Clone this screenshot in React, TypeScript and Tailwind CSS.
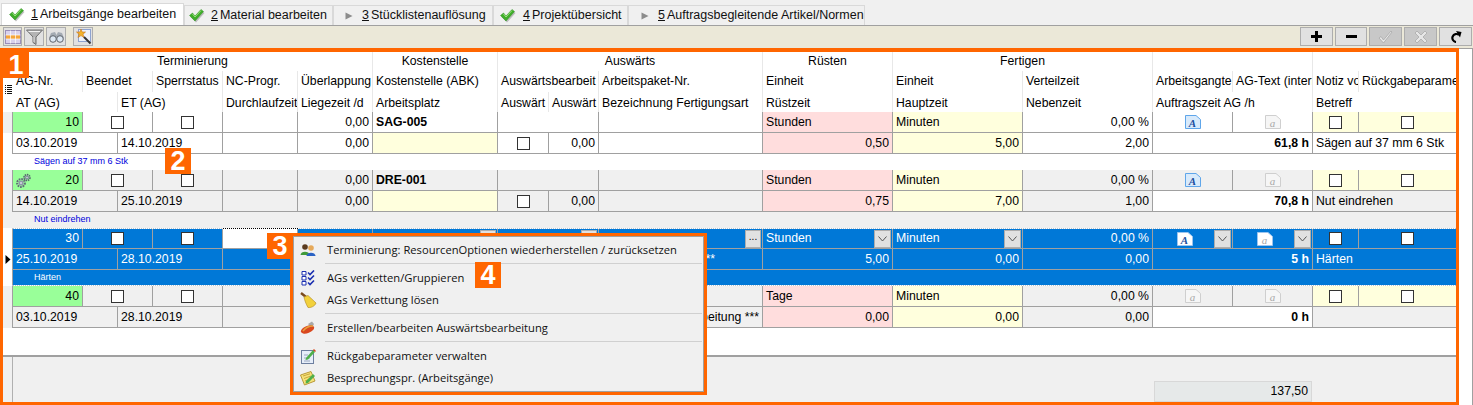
import React from 'react';

const TRACKS = 'grid grid-cols-[70px_35px_35px_70px_75px_75px_125px_51px_50px_164px_130px_130px_130px_80px_80px_46px_97px]';
const spans: Record<number, string> = { 1: 'col-span-1', 2: 'col-span-2', 3: 'col-span-3', 6: 'col-span-6' };

const Check = () => (
  <svg width="16" height="14" viewBox="0 0 16 14" className="shrink-0">
    <path d="M1.5 8 L4.5 5.5 L7 8.5 L13 2 L15.5 4 L7 13.5 Z" fill="#9a9a9a" opacity="0.6" />
    <path d="M0.5 6.5 L3.5 4 L6 7 L12 0.5 L14.5 2.5 L6 12 Z" fill="#3fae2a" stroke="#2f8f20" strokeWidth="0.5" />
    <path d="M3.5 5 L6 8 L12 1.5" fill="none" stroke="#9be07e" strokeWidth="1" />
  </svg>
);

const Tri = () => (
  <svg width="8" height="8" viewBox="0 0 8 8" className="shrink-0">
    <path d="M0.5 0.5 L7.5 4 L0.5 7.5 Z" fill="#8c8c8c" />
  </svg>
);

const Tab = ({ w, pl, icon, num, label, active }: { w: string; pl: string; icon: React.ReactNode; num: string; label: string; active?: boolean }) => (
  <div className={`${w} ${pl} ${active ? 'h-[22px] bg-white' : 'h-[20px] bg-[#f0f0f0]'} flex items-center border border-b-0 border-[#d9d9d9] whitespace-nowrap text-[12.5px] text-[#111]`}>
    {icon}
    <u>{num}</u>
    <span className="ml-[2px]">{label}</span>
  </div>
);

const ToolBtn = ({ w, off, children }: { w: string; off?: boolean; children: React.ReactNode }) => (
  <div className={`${w} ${off ? 'bg-[#c8c8c8]' : 'bg-[#e1e1e1]'} h-[19px] border border-[#adadad] flex items-center justify-center`}>{children}</div>
);

const Checkbox = () => <div className="w-[13px] h-[13px] bg-white border border-[#333]" />;

const Cell = ({ span = 1, className = '', flush, children }: { span?: number; className?: string; flush?: boolean; children?: React.ReactNode }) => (
  <div className={`${spans[span]} ${flush ? 'pl-[3px] pr-px' : 'px-[3px]'} flex items-center overflow-hidden whitespace-nowrap border-r border-b border-[#a0a0a0] ${className}`}>
    {children}
  </div>
);

const Head = ({ span = 1, className = '', children }: { span?: number; className?: string; children?: React.ReactNode }) => (
  <div className={`${spans[span]} px-[3px] flex items-center overflow-hidden whitespace-nowrap border-r border-[#e8e8e8] ${className}`}>{children}</div>
);

const DocIcon = ({ letter, tone }: { letter: string; tone: 'blue' | 'gray' | 'selBlue' | 'selGray' }) => {
  const fill = tone === 'blue' ? '#d8eafb' : tone === 'gray' ? '#f6f6f6' : '#ffffff';
  const stroke = tone === 'blue' ? '#5fa6ea' : tone === 'gray' ? '#cfcfcf' : '#9cc4ee';
  const ink = tone === 'blue' || tone === 'selBlue' ? '#1d4f9e' : '#a8a8a8';
  return (
    <svg width="16" height="14" viewBox="0 0 16 14">
      <path d="M0.5 0.5 H11 L15.5 4.5 V13.5 H0.5 Z" fill={fill} stroke={stroke} />
      <text x="7.5" y="11.5" textAnchor="middle" fontSize="11" fontWeight={letter === 'A' ? 700 : 400} fontStyle="italic" fontFamily="Liberation Serif, serif" fill={ink}>
        {letter}
      </text>
    </svg>
  );
};

const Arrow = () => (
  <div className="w-[17px] h-[18px] shrink-0 bg-[#e1e1e1] border border-[#adadad] flex items-center justify-center">
    <svg width="9" height="6" viewBox="0 0 9 6">
      <path d="M0.5 0.5 L4.5 5 L8.5 0.5" fill="none" stroke="#555" />
    </svg>
  </div>
);

const Dots = () => (
  <div className="w-[16px] h-[18px] shrink-0 bg-[#e1e1e1] border border-[#adadad] flex items-center justify-center text-[10px] leading-none pb-[3px] text-black">...</div>
);

const Gears = () => (
  <svg width="15" height="15" viewBox="0 0 15 15" className="shrink-0">
    <circle cx="5" cy="10" r="3.9" fill="none" stroke="#5f6a78" strokeWidth="2" strokeDasharray="1.7 0.9" />
    <circle cx="5" cy="10" r="2.6" fill="#8f99a8" />
    <circle cx="5" cy="10" r="1" fill="#d5dbe3" />
    <circle cx="11" cy="4.5" r="2.9" fill="none" stroke="#56606e" strokeWidth="1.8" strokeDasharray="1.4 0.8" />
    <circle cx="11" cy="4.5" r="2" fill="#838d9c" />
    <circle cx="11" cy="4.5" r="0.8" fill="#d5dbe3" />
  </svg>
);

type Line = { h: string; ind?: string; arrow?: boolean; children: React.ReactNode };
const GridLine = ({ h, ind = 'bg-white', arrow, children }: Line) => (
  <div className={`flex w-[1453px] ${h}`}>
    <div className={`w-[9px] shrink-0 flex items-center justify-center ${ind}`}>
      {arrow && (
        <svg width="6" height="9" viewBox="0 0 6 9">
          <path d="M0.5 0 L5.5 4.5 L0.5 9 Z" fill="#000" />
        </svg>
      )}
    </div>
    <div className={`${TRACKS} border-l border-[#a0a0a0]`}>{children}</div>
  </div>
);

const MenuItem = ({ icon, label }: { icon: React.ReactNode; label: string }) => (
  <div className="h-[22px] flex items-center whitespace-nowrap">
    <div className="w-[33px] pl-[6px] shrink-0 flex items-center">{icon}</div>
    <span>{label}</span>
  </div>
);

const Sep = () => (
  <div className="h-[6px] pl-[31px] pr-px pt-[2px]">
    <div className="h-px bg-[#d0d0d0]" />
  </div>
);

const Badge = ({ n, pos }: { n: string; pos: string }) => (
  <div className={`absolute ${pos} w-[26px] h-[26px] bg-[#ff6600] text-white font-bold text-[27px] leading-none flex items-center justify-center`}>{n}</div>
);

export default function App() {
  return (
    <div className="relative w-[1473px] h-[405px] overflow-hidden bg-white flex flex-col font-['Liberation_Sans',sans-serif] text-[12.25px] text-black">
      {/* tabs */}
      <div className="h-[26px] shrink-0 pt-[3px] bg-[#f0f0f0] border-b border-[#a0a0a0] flex items-end pl-px">
        <Tab active w="w-[183px]" pl="pl-[7px]" icon={<span className="mr-[6px] flex"><Check /></span>} num="1" label="Arbeitsgänge bearbeiten" />
        <Tab w="w-[149px]" pl="pl-[4px]" icon={<span className="mr-[6px] flex"><Check /></span>} num="2" label="Material bearbeiten" />
        <Tab w="w-[160px]" pl="pl-[11px]" icon={<span className="mr-[9px] flex"><Tri /></span>} num="3" label="Stücklistenauflösung" />
        <Tab w="w-[135px]" pl="pl-[6px]" icon={<span className="mr-[7px] flex"><Check /></span>} num="4" label="Projektübersicht" />
        <Tab w="w-[237px]" pl="pl-[12px]" icon={<span className="mr-[9px] flex"><Tri /></span>} num="5" label="Auftragsbegleitende Artikel/Normen" />
      </div>

      {/* toolbar */}
      <div className="h-[22px] shrink-0 bg-[#ebe8d8] flex items-start pt-px pl-[3px] pr-px">
        <div className="flex gap-[2px]">
          <ToolBtn w="w-[19px]">
            <svg width="16" height="14" viewBox="0 0 16 14">
              <rect x="0.5" y="0.5" width="15" height="13" fill="#d9d2ec" stroke="#9a8fb8" />
              <rect x="1" y="5" width="14" height="4" fill="#f4a63c" />
              <path d="M5.5 0.5 V13.5 M10.5 0.5 V13.5 M0.5 5 H15.5 M0.5 9 H15.5" stroke="#fff" strokeWidth="0.7" />
            </svg>
          </ToolBtn>
          <ToolBtn w="w-[20px]">
            <svg width="17" height="16" viewBox="0 0 17 16">
              <path d="M0.5 1 H16.5 L10 8 V15.5 L7 13.5 V8 Z" fill="#b4b4b4" stroke="#6f6f6f" />
              <path d="M2.5 2.5 H14" stroke="#f2f2f2" />
              <path d="M8 8 V13" stroke="#dedede" />
            </svg>
          </ToolBtn>
          <ToolBtn w="w-[20px]">
            <svg width="17" height="12" viewBox="0 0 17 12">
              <path d="M3 2 L7 1 L8.5 4 L10 1 L14 2 L16 7 H1 Z" fill="#a4abb3" />
              <circle cx="5" cy="8" r="3.3" fill="#dde8f3" stroke="#5f656c" />
              <circle cx="12" cy="8" r="3.3" fill="#dde8f3" stroke="#5f656c" />
            </svg>
          </ToolBtn>
          <div className="w-[3px]" />
          <ToolBtn w="w-[20px]">
            <svg width="17" height="17" viewBox="0 0 17 17">
              <rect x="3.5" y="1.5" width="12" height="12" fill="#eef2fb" stroke="#8ea3cf" />
              <path d="M6 1 L7.2 4 L10.5 4 L8 6.2 L9 9.5 L6 7.6 L3 9.5 L4 6.2 L1.5 4 L4.8 4 Z" fill="#f2b32c" stroke="#c9731a" strokeWidth="0.6" />
              <path d="M9 9 L15.5 15.5" stroke="#333" strokeWidth="2" />
            </svg>
          </ToolBtn>
        </div>
        <div className="ml-auto flex gap-[2px]">
          <ToolBtn w="w-[33px]">
            <svg width="11" height="11" viewBox="0 0 11 11"><path d="M4 0 H7 V4 H11 V7 H7 V11 H4 V7 H0 V4 H4 Z" fill="#000" /></svg>
          </ToolBtn>
          <ToolBtn w="w-[32px]">
            <svg width="11" height="3" viewBox="0 0 11 3"><rect width="11" height="3" fill="#000" /></svg>
          </ToolBtn>
          <ToolBtn off w="w-[33px]">
            <svg width="15" height="14" viewBox="0 0 15 14"><path d="M1 8 L3 6.5 L5.5 10 L13 1 L14 2 L5.5 13 Z" fill="#e6e6e6" stroke="#a4a4a4" strokeWidth="0.7" /></svg>
          </ToolBtn>
          <ToolBtn off w="w-[33px]">
            <svg width="14" height="14" viewBox="0 0 14 14"><path d="M1 3 L3 1 L7 5 L11 1 L13 3 L9 7 L13 11 L11 13 L7 9 L3 13 L1 11 L5 7 Z" fill="#e6e6e6" stroke="#a4a4a4" strokeWidth="0.7" /></svg>
          </ToolBtn>
          <ToolBtn w="w-[33px]">
            <svg width="13" height="12" viewBox="0 0 13 12">
              <path d="M10 4 A4 4 0 1 0 7 11" fill="none" stroke="#000" strokeWidth="2.2" />
              <path d="M7 0 L12.5 1 L11 6.5 Z" fill="#000" />
            </svg>
          </ToolBtn>
        </div>
      </div>

      {/* main grid */}
      <div className="relative flex-1 flex flex-col border-t border-r border-[#a0a0a0] pl-[3px] pt-[3px]">
        <div className="flex w-[1453px]">
          <div className="w-[10px] shrink-0 pt-[33px] pl-[2px]">
            <svg width="7" height="10" viewBox="0 0 7 10" className="block">
              <path d="M0 0.5 H1 M2 0.5 H7 M0 2.5 H1 M2 2.5 H7 M0 4.5 H1 M2 4.5 H7 M0 6.5 H1 M2 6.5 H7 M0 8.5 H1 M2 8.5 H7" stroke="#111" />
            </svg>
          </div>
          <div className="flex flex-col">
            <div className={`${TRACKS} h-[19px]`}>
              <Head span={6} className="justify-center">Terminierung</Head>
              <Head className="justify-center">Kostenstelle</Head>
              <Head span={3} className="justify-center">Auswärts</Head>
              <Head className="justify-center">Rüsten</Head>
              <Head span={2} className="justify-center">Fertigen</Head>
              <Head span={2} />
              <Head span={2} className="border-r-0" />
            </div>
            <div className={`${TRACKS} h-[21px]`}>
              <Head>AG-Nr.</Head>
              <Head span={2}>Beendet</Head>
              <Head>Sperrstatus</Head>
              <Head>NC-Progr.</Head>
              <Head>Überlappung</Head>
              <Head>Kostenstelle (ABK)</Head>
              <Head span={2}>Auswärtsbearbeit</Head>
              <Head>Arbeitspaket-Nr.</Head>
              <Head>Einheit</Head>
              <Head>Einheit</Head>
              <Head>Verteilzeit</Head>
              <Head>Arbeitsgangte</Head>
              <Head>AG-Text (intern</Head>
              <Head>Notiz vo</Head>
              <Head className="border-r-0">Rückgabeparame</Head>
            </div>
            <div className={`${TRACKS} h-[20px] [&>div]:pt-[2px]`}>
              <Head span={2}>AT (AG)</Head>
              <Head span={2}>ET (AG)</Head>
              <Head>Durchlaufzeit</Head>
              <Head>Liegezeit /d</Head>
              <Head>Arbeitsplatz</Head>
              <Head>Auswärt</Head>
              <Head>Auswärt</Head>
              <Head>Bezeichnung Fertigungsart</Head>
              <Head>Rüstzeit</Head>
              <Head>Hauptzeit</Head>
              <Head>Nebenzeit</Head>
              <Head span={2}>Auftragszeit AG /h</Head>
              <Head span={2} className="border-r-0">Betreff</Head>
            </div>
          </div>
        </div>

        {/* AG 10 */}
        <GridLine h="h-[21px]" ind="bg-[#f0f0f0]">
          <Cell className="bg-[#99ff99] justify-end">10</Cell>
          <Cell span={2} className="justify-center"><Checkbox /></Cell>
          <Cell className="justify-center"><Checkbox /></Cell>
          <Cell />
          <Cell className="justify-end">0,00</Cell>
          <Cell className="font-bold">SAG-005</Cell>
          <Cell span={2} />
          <Cell />
          <Cell className="bg-[#ffdddd]">Stunden</Cell>
          <Cell className="bg-[#ffffdd]">Minuten</Cell>
          <Cell className="justify-end">0,00 %</Cell>
          <Cell className="justify-center"><DocIcon letter="A" tone="blue" /></Cell>
          <Cell className="justify-center"><DocIcon letter="a" tone="gray" /></Cell>
          <Cell className="bg-[#ffffdd] justify-center"><Checkbox /></Cell>
          <Cell className="bg-[#ffffdd] justify-center border-r-0"><Checkbox /></Cell>
        </GridLine>
        <GridLine h="h-[21px]">
          <Cell span={2}>03.10.2019</Cell>
          <Cell span={2}>14.10.2019</Cell>
          <Cell />
          <Cell className="justify-end">0,00</Cell>
          <Cell className="bg-[#ffffdd]" />
          <Cell className="justify-center"><Checkbox /></Cell>
          <Cell className="justify-end">0,00</Cell>
          <Cell />
          <Cell className="bg-[#ffdddd] justify-end">0,50</Cell>
          <Cell className="bg-[#ffffdd] justify-end">5,00</Cell>
          <Cell className="justify-end">2,00</Cell>
          <Cell span={2} className="justify-end font-bold">61,8 h</Cell>
          <Cell span={2} className="border-r-0">Sägen auf 37 mm 6 Stk</Cell>
        </GridLine>
        <div className="h-[16px] w-[1453px] pl-[31px] flex items-center text-[9px] text-[#0000dd]">Sägen auf 37 mm 6 Stk</div>

        {/* AG 20 */}
        <div className="bg-[#f0f0f0] w-[1453px]">
          <GridLine h="h-[21px]" ind="bg-[#f0f0f0]">
            <Cell className="bg-[#99ff99] justify-between"><Gears /><span>20</span></Cell>
            <Cell span={2} className="justify-center"><Checkbox /></Cell>
            <Cell className="justify-center"><Checkbox /></Cell>
            <Cell />
            <Cell className="justify-end">0,00</Cell>
            <Cell className="font-bold">DRE-001</Cell>
            <Cell span={2} />
            <Cell />
            <Cell className="bg-[#ffdddd]">Stunden</Cell>
            <Cell className="bg-[#ffffdd]">Minuten</Cell>
            <Cell className="justify-end">0,00 %</Cell>
            <Cell className="justify-center"><DocIcon letter="A" tone="blue" /></Cell>
            <Cell className="justify-center"><DocIcon letter="a" tone="gray" /></Cell>
            <Cell className="bg-[#ffffdd] justify-center"><Checkbox /></Cell>
            <Cell className="bg-[#ffffdd] justify-center border-r-0"><Checkbox /></Cell>
          </GridLine>
          <GridLine h="h-[21px]" ind="bg-[#f0f0f0]">
            <Cell span={2}>14.10.2019</Cell>
            <Cell span={2}>25.10.2019</Cell>
            <Cell />
            <Cell className="justify-end">0,00</Cell>
            <Cell className="bg-[#ffffdd]" />
            <Cell className="justify-center"><Checkbox /></Cell>
            <Cell className="justify-end">0,00</Cell>
            <Cell />
            <Cell className="bg-[#ffdddd] justify-end">0,75</Cell>
            <Cell className="bg-[#ffffdd] justify-end">7,00</Cell>
            <Cell className="justify-end">1,00</Cell>
            <Cell span={2} className="bg-white justify-end font-bold">70,8 h</Cell>
            <Cell span={2} className="border-r-0">Nut eindrehen</Cell>
          </GridLine>
          <div className="h-[16px] pl-[31px] flex items-center text-[9px] text-[#0000dd]">Nut eindrehen</div>
        </div>

        {/* AG 30 - selected */}
        <div className="text-white w-[1453px]">
          <div className="h-px ml-[9px] border-t border-dotted border-[#b8c4d0]">
            <div className="h-0 -mt-px ml-[211px] w-[75px] border-t border-dotted border-black" />
          </div>
          <div className="bg-[#0078d7]">
            <GridLine h="h-[20px]">
              <Cell className="justify-end">30</Cell>
              <Cell span={2} className="justify-center"><Checkbox /></Cell>
              <Cell className="justify-center"><Checkbox /></Cell>
              <Cell className="bg-white" />
              <Cell />
              <Cell flush className="justify-end"><Dots /></Cell>
              <Cell span={2} flush className="justify-end"><Dots /></Cell>
              <Cell flush className="justify-end"><Dots /></Cell>
              <Cell flush className="justify-between">Stunden<Arrow /></Cell>
              <Cell flush className="justify-between">Minuten<Arrow /></Cell>
              <Cell className="justify-end">0,00 %</Cell>
              <Cell flush>
                <div className="flex-1 flex justify-center"><DocIcon letter="A" tone="selBlue" /></div>
                <Arrow />
              </Cell>
              <Cell flush>
                <div className="flex-1 flex justify-center"><DocIcon letter="a" tone="selGray" /></div>
                <Arrow />
              </Cell>
              <Cell className="justify-center"><Checkbox /></Cell>
              <Cell className="justify-center border-r-0"><Checkbox /></Cell>
            </GridLine>
            <GridLine h="h-[21px]" arrow>
              <Cell span={2}>25.10.2019</Cell>
              <Cell span={2}>28.10.2019</Cell>
              <Cell />
              <Cell />
              <Cell />
              <Cell />
              <Cell />
              <Cell className="justify-end pr-[47px]">*** Härten ***</Cell>
              <Cell className="justify-end">5,00</Cell>
              <Cell className="justify-end">0,00</Cell>
              <Cell className="justify-end">0,00</Cell>
              <Cell span={2} className="justify-end font-bold">5 h</Cell>
              <Cell span={2} className="border-r-0">Härten</Cell>
            </GridLine>
            <div className="h-[15px] flex">
              <div className="w-[9px] bg-white" />
              <div className="flex-1 pl-[21px] border-l border-[#a0a0a0] flex items-center text-[9px]">Härten</div>
            </div>
          </div>
          <div className="h-px ml-[9px] border-t border-dotted border-[#b8c4d0]" />
        </div>

        {/* AG 40 */}
        <div className="bg-[#f0f0f0] w-[1453px]">
          <GridLine h="h-[21px]" ind="bg-[#f0f0f0]">
            <Cell className="bg-[#99ff99] justify-end">40</Cell>
            <Cell span={2} className="justify-center"><Checkbox /></Cell>
            <Cell className="justify-center"><Checkbox /></Cell>
            <Cell />
            <Cell className="justify-end">0,00</Cell>
            <Cell />
            <Cell span={2} />
            <Cell />
            <Cell className="bg-[#ffdddd]">Tage</Cell>
            <Cell className="bg-[#ffffdd]">Minuten</Cell>
            <Cell className="justify-end">0,00 %</Cell>
            <Cell className="justify-center"><DocIcon letter="a" tone="gray" /></Cell>
            <Cell className="justify-center"><DocIcon letter="a" tone="gray" /></Cell>
            <Cell className="bg-[#ffffdd] justify-center"><Checkbox /></Cell>
            <Cell className="bg-[#ffffdd] justify-center border-r-0"><Checkbox /></Cell>
          </GridLine>
          <GridLine h="h-[21px]" ind="bg-[#f0f0f0]">
            <Cell span={2}>03.10.2019</Cell>
            <Cell span={2}>28.10.2019</Cell>
            <Cell />
            <Cell className="justify-end">0,00</Cell>
            <Cell />
            <Cell />
            <Cell />
            <Cell className="justify-end">*** Auswärtsbearbeitung ***</Cell>
            <Cell className="bg-[#ffdddd] justify-end">0,00</Cell>
            <Cell className="bg-[#ffffdd] justify-end">0,00</Cell>
            <Cell className="justify-end">0,00</Cell>
            <Cell span={2} className="bg-white justify-end font-bold">0 h</Cell>
            <Cell span={2} className="border-r-0" />
          </GridLine>
        </div>

        <div className="flex-1" />

        {/* footer */}
        <div className="h-[50px] w-[1453px] border-t-2 border-[#a0a0a0] bg-[#f0f0f0] flex flex-col justify-end pb-[3px]">
          <div className="ml-[1151px] w-[158px] h-[21px] bg-[#e6e9e9] border border-[#d8d8d8] flex items-center justify-end pr-[3px]">137,50</div>
        </div>
        <div className="absolute left-[12px] top-[308px] bottom-0 w-px bg-[#b0b0b0]" />
      </div>

      {/* context menu */}
      <div className="absolute left-[290px] top-[233px] w-[417px] h-[162px] border-[3px] border-[#ff6600]">
        <div className="h-full bg-[#f0f0f0] border border-[#a0a0a0] pt-[2px] font-['Open_Sans',sans-serif] text-[11.2px] text-[#111]">
          <MenuItem
            label="Terminierung: ResourcenOptionen wiederherstellen / zurücksetzen"
            icon={
              <svg width="16" height="14" viewBox="0 0 16 14">
                <circle cx="5" cy="4" r="2.8" fill="#5a3b1e" />
                <path d="M0.5 12 C0.5 7.5 9.5 7.5 9.5 12 Z" fill="#3f9a3a" />
                <circle cx="11" cy="5" r="2.8" fill="#e6a95a" />
                <path d="M6.5 13 C6.5 8.5 15.5 8.5 15.5 13 Z" fill="#2a62c4" />
              </svg>
            }
          />
          <Sep />
          <MenuItem
            label="AGs verketten/Gruppieren"
            icon={
              <svg width="14" height="16" viewBox="0 0 14 16" className="ml-px">
                <path d="M1 1.5 H5 V5 H1 Z M1 6.5 H5 V10 H1 Z M1 11.5 H5 V15 H1 Z" fill="#fff" stroke="#1a2fb0" />
                <path d="M7 2.5 L9 4.5 L13 0.5 M7 7.5 L9 9.5 L13 5.5 M7 12.5 L9 14.5 L13 10.5" fill="none" stroke="#1a2fb0" strokeWidth="1.6" />
              </svg>
            }
          />
          <MenuItem
            label="AGs Verkettung lösen"
            icon={
              <svg width="17" height="17" viewBox="0 0 17 17">
                <path d="M1 1 L6 5" stroke="#7a4a1c" strokeWidth="2.4" />
                <path d="M4 5 L8 3.5 L16 11 C15 14 11 16 8 15.5 C6 12 4.5 8 4 5 Z" fill="#f2d13c" stroke="#b8912a" strokeWidth="0.7" />
              </svg>
            }
          />
          <Sep />
          <MenuItem
            label="Erstellen/bearbeiten Auswärtsbearbeitung"
            icon={
              <svg width="16" height="14" viewBox="0 0 16 14">
                <path d="M8 3 L12 0.5 L14 3 L12 7 Z" fill="#a8a8a8" />
                <ellipse cx="7.5" cy="8.5" rx="7" ry="3.6" fill="#d9481f" transform="rotate(-22 7.5 8.5)" />
                <path d="M3 10 C6 6 10 5 13 5" stroke="#e9a23c" strokeWidth="1.4" fill="none" />
              </svg>
            }
          />
          <Sep />
          <MenuItem
            label="Rückgabeparameter verwalten"
            icon={
              <svg width="16" height="16" viewBox="0 0 16 16">
                <rect x="1.5" y="2.5" width="12" height="13" fill="#e7eef9" stroke="#6d7f9f" />
                <path d="M4 7 H8 M4 10 H10 M4 13 H10" stroke="#9aa8c0" />
                <path d="M6 10 L13 2 L15 4 L8 11.5 L5.5 12 Z" fill="#4fb04a" />
                <path d="M13 2 L14 1 L16 3 L15 4 Z" fill="#d9481f" />
              </svg>
            }
          />
          <MenuItem
            label="Besprechungspr. (Arbeitsgänge)"
            icon={
              <svg width="16" height="15" viewBox="0 0 16 15">
                <path d="M0.5 4 L11 0.5 L15 10 L4.5 14 Z" fill="#f6e27a" stroke="#b99a3a" />
                <path d="M3 5 L10 2.8 M4 7.5 L11 5 M5 10 L10 8" stroke="#c9a73c" />
                <path d="M6 10 L13 3 L15 5 L8 12 L5.5 12.5 Z" fill="#4fb04a" />
              </svg>
            }
          />
        </div>
      </div>

      {/* callouts */}
      <div className="absolute left-0 top-[48px] w-[1459px] h-[357px] border-[3px] border-t-[4px] border-[#ff6600] pointer-events-none" />
      <Badge n="1" pos="left-[3px] top-[52px]" />
      <Badge n="2" pos="left-[165px] top-[148px]" />
      <Badge n="3" pos="left-[267px] top-[233px]" />
      <Badge n="4" pos="left-[475px] top-[262px]" />
    </div>
  );
}
